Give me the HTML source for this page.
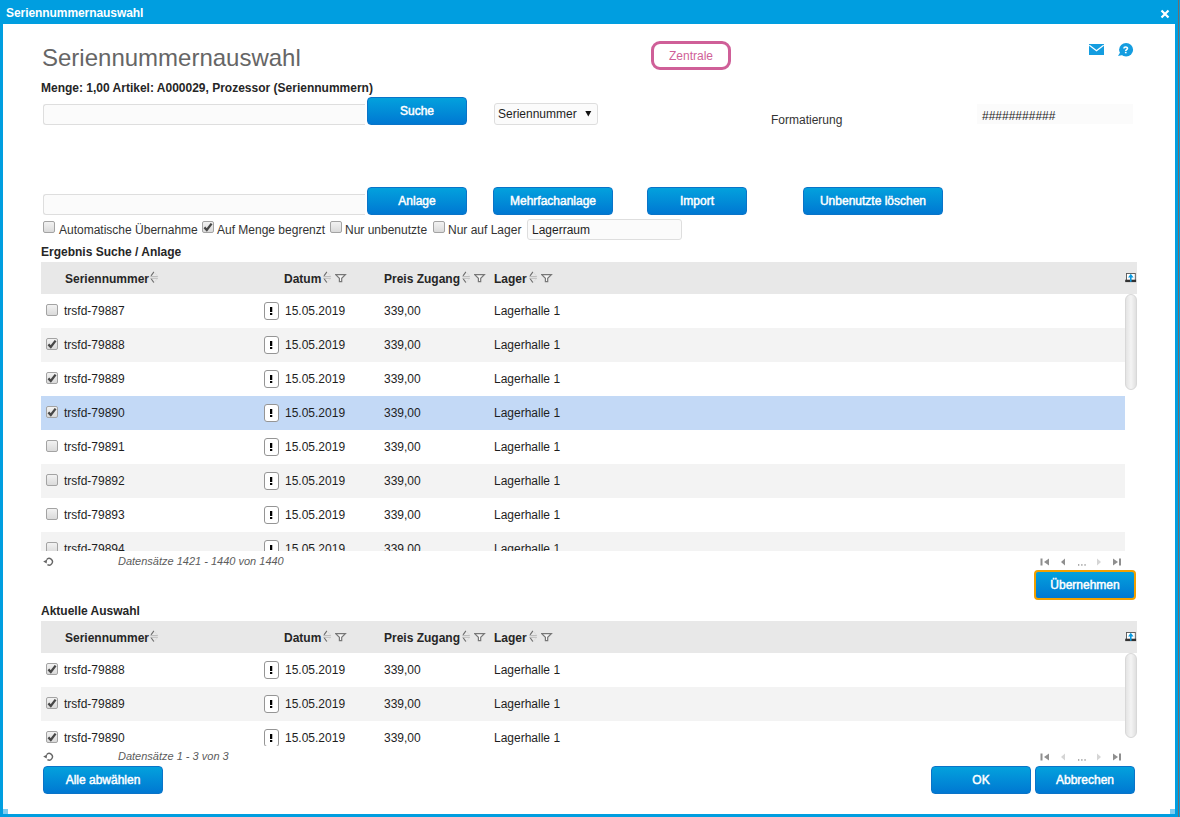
<!DOCTYPE html><html><head><meta charset="utf-8"><style>
*{box-sizing:border-box;margin:0;padding:0}
html,body{width:1180px;height:817px;overflow:hidden;background:#009ee0;font-family:"Liberation Sans",sans-serif;font-size:12px;color:#1e1e1e}
div,span{position:absolute}
svg{display:block}
.t{line-height:14px;white-space:nowrap}
.b{font-weight:bold;color:#262626}
.btn{height:28px;border:1px solid #0a74c8;border-radius:4px;background:linear-gradient(#03a1dd,#0078d2);color:#fff;font-weight:normal;-webkit-text-stroke:0.45px #fff;text-align:center;line-height:26px;white-space:nowrap}
.inp{border:1px solid #dedede;border-radius:3px;background:#fbfbfb}
.cb{width:12px;height:12px;border:1px solid #a3a3a3;border-radius:2px;background:linear-gradient(#f2f2f2,#dadada)}
.cb svg{position:absolute;left:0;top:0}
.hdr{height:32px;background:#e8e8e8}
.row{height:34px}
.ex{width:15px;height:18px;border:1px solid #959595;border-radius:3px;background:#fff}
.ex:before{content:"";position:absolute;left:5px;top:4px;width:2px;height:5px;background:#000;box-shadow:0.4px 0 0 #555}
.ex:after{content:"";position:absolute;left:5px;top:10px;width:2px;height:2px;background:#000;box-shadow:0.4px 0 0 #555}
.ft{font-style:italic;font-size:11px;line-height:13px;color:#5c5c5c;white-space:nowrap}
</style></head><body>
<div style="left:3px;top:24px;width:1172px;height:790px;background:#fff"></div>
<div style="left:1178px;top:0;width:1px;height:817px;background:#6e6e6e"></div>
<div style="left:3px;top:809px;width:5px;height:5px;background:#7fcdf0"></div>
<div style="left:1170px;top:809px;width:5px;height:5px;background:#7fcdf0"></div>
<div class="t b" style="left:6px;top:6px;color:#fff;letter-spacing:-0.07px">Seriennummernauswahl</div>
<span style="left:1160px;top:9px"><svg width="10" height="10" viewBox="0 0 10 10"><path d="M1.5 1.5 L8.5 8.5 M8.5 1.5 L1.5 8.5" stroke="#fff" stroke-width="2.2"/></svg></span>
<div class="t" style="left:42px;top:44px;font-size:24px;line-height:28px;color:#666">Seriennummernauswahl</div>
<div style="left:651px;top:41px;width:80px;height:29px;border:3px solid #cf5f98;border-radius:9px;background:#fff"></div>
<div class="t" style="left:669px;top:49px;color:#cf5f98">Zentrale</div>
<span style="left:1089px;top:44px"><svg width="15" height="11" viewBox="0 0 15 11"><rect width="15" height="11" fill="#149de0"/><path d="M0.3 1.2 L7.5 6.8 L14.7 1.2" fill="none" stroke="#fff" stroke-width="1.3"/></svg></span>
<span style="left:1117px;top:41px"><svg width="17" height="17" viewBox="0 0 17 17"><ellipse cx="9.1" cy="8.7" rx="7" ry="6.7" fill="#149de0"/><path d="M1 15 L4 10 L8 13.5 Z" fill="#149de0"/><path d="M6.9 7.4 C6.9 5.6 10.5 5.5 10.5 7.3 C10.5 8.5 8.7 8.6 8.7 10" fill="none" stroke="#fff" stroke-width="1.6"/><rect x="7.9" y="10.8" width="1.7" height="1.5" fill="#fff"/></svg></span>
<div class="t b" style="left:41px;top:81px;">Menge: 1,00 Artikel: A000029, Prozessor (Seriennummern)</div>
<div class="inp" style="left:43px;top:104px;width:322px;height:21px;border-right:0;border-radius:3px 0 0 3px"></div>
<div class="btn" style="left:367px;top:97px;width:100px;">Suche</div>
<div class="inp" style="left:494px;top:103px;width:104px;height:22px"></div>
<div class="t" style="left:498px;top:107px;">Seriennummer</div>
<span style="left:585px;top:111px"><svg width="7" height="6" viewBox="0 0 7 6"><path d="M0.3 0 H6.3 L3.3 5.5 Z" fill="#111"/></svg></span>
<div class="t" style="left:771px;top:113px;color:#333">Formatierung</div>
<div style="left:977px;top:104px;width:156px;height:20px;background:#fbfbfb"></div>
<div class="t" style="left:982px;top:109px;">###########</div>
<div class="inp" style="left:43px;top:194px;width:322px;height:21px;border-right:0;border-radius:3px 0 0 3px"></div>
<div class="btn" style="left:367px;top:187px;width:100px;">Anlage</div>
<div class="btn" style="left:493px;top:187px;width:120px;">Mehrfachanlage</div>
<div class="btn" style="left:647px;top:187px;width:100px;">Import</div>
<div class="btn" style="left:803px;top:187px;width:140px;">Unbenutzte löschen</div>
<div class="cb" style="left:43px;top:221px"></div>
<div class="t" style="left:59px;top:223px;color:#333">Automatische Übernahme</div>
<div class="cb" style="left:202px;top:221px"><svg width="10" height="10" viewBox="0 0 10 10"><path d="M1.4 5.4 L3.8 8.0 L8.6 1.6" fill="none" stroke="#474747" stroke-width="2.3"/></svg></div>
<div class="t" style="left:217px;top:223px;color:#333">Auf Menge begrenzt</div>
<div class="cb" style="left:330px;top:221px"></div>
<div class="t" style="left:345px;top:223px;color:#333">Nur unbenutzte</div>
<div class="cb" style="left:433px;top:221px"></div>
<div class="t" style="left:448px;top:223px;color:#333">Nur auf Lager</div>
<div class="inp" style="left:527px;top:219px;width:155px;height:21px"></div>
<div class="t" style="left:532px;top:223px;">Lagerraum</div>
<div class="t b" style="left:41px;top:245px;">Ergebnis Suche / Anlage</div>
<div class="hdr" style="left:41px;top:262px;width:1096px"></div>
<div class="t b" style="left:65px;top:272px;">Seriennummer</div>
<span style="left:150px;top:271px"><svg width="9" height="12" viewBox="0 0 9 12"><path d="M3.9 0.9 L1 4.9 M1 7.5 L3.9 11.6" stroke="#6e6e6e" stroke-width="1.1" fill="none"/><path d="M4.1 0.9 L7.8 5.4 M7.8 7.2 L4.1 11.6" stroke="#dcdcdc" stroke-width="1" fill="none"/><path d="M0.3 5.5 H7.8 M0.3 7.3 H7.8" stroke="#b8b8b8" stroke-width="0.9"/></svg></span>
<div class="t b" style="left:284px;top:272px;">Datum</div>
<span style="left:323px;top:271px"><svg width="9" height="12" viewBox="0 0 9 12"><path d="M3.9 0.9 L1 4.9 M1 7.5 L3.9 11.6" stroke="#6e6e6e" stroke-width="1.1" fill="none"/><path d="M4.1 0.9 L7.8 5.4 M7.8 7.2 L4.1 11.6" stroke="#dcdcdc" stroke-width="1" fill="none"/><path d="M0.3 5.5 H7.8 M0.3 7.3 H7.8" stroke="#b8b8b8" stroke-width="0.9"/></svg></span>
<span style="left:335px;top:274px"><svg width="12" height="9" viewBox="0 0 12 9"><path d="M0.6 0.6 H10.4 L6.7 4.3 V7.6 H4.4 V4.3 Z" fill="#f6f6f6" stroke="#777" stroke-width="1.2" stroke-linejoin="miter"/></svg></span>
<div class="t b" style="left:384px;top:272px;">Preis Zugang</div>
<span style="left:462px;top:271px"><svg width="9" height="12" viewBox="0 0 9 12"><path d="M3.9 0.9 L1 4.9 M1 7.5 L3.9 11.6" stroke="#6e6e6e" stroke-width="1.1" fill="none"/><path d="M4.1 0.9 L7.8 5.4 M7.8 7.2 L4.1 11.6" stroke="#dcdcdc" stroke-width="1" fill="none"/><path d="M0.3 5.5 H7.8 M0.3 7.3 H7.8" stroke="#b8b8b8" stroke-width="0.9"/></svg></span>
<span style="left:474px;top:274px"><svg width="12" height="9" viewBox="0 0 12 9"><path d="M0.6 0.6 H10.4 L6.7 4.3 V7.6 H4.4 V4.3 Z" fill="#f6f6f6" stroke="#777" stroke-width="1.2" stroke-linejoin="miter"/></svg></span>
<div class="t b" style="left:494px;top:272px;">Lager</div>
<span style="left:529px;top:271px"><svg width="9" height="12" viewBox="0 0 9 12"><path d="M3.9 0.9 L1 4.9 M1 7.5 L3.9 11.6" stroke="#6e6e6e" stroke-width="1.1" fill="none"/><path d="M4.1 0.9 L7.8 5.4 M7.8 7.2 L4.1 11.6" stroke="#dcdcdc" stroke-width="1" fill="none"/><path d="M0.3 5.5 H7.8 M0.3 7.3 H7.8" stroke="#b8b8b8" stroke-width="0.9"/></svg></span>
<span style="left:541px;top:274px"><svg width="12" height="9" viewBox="0 0 12 9"><path d="M0.6 0.6 H10.4 L6.7 4.3 V7.6 H4.4 V4.3 Z" fill="#f6f6f6" stroke="#777" stroke-width="1.2" stroke-linejoin="miter"/></svg></span>
<span style="left:1125px;top:273px"><svg width="12" height="10" viewBox="0 0 12 10"><rect x="1.5" y="0.5" width="8.8" height="7" fill="#fff" stroke="#555" stroke-width="0.9"/><rect x="0.2" y="6.7" width="10.9" height="2.4" fill="#333"/><path d="M5.8 0.7 L3 4.4 H5 V8.8 H6.6 V4.4 H8.6 Z" fill="#0a9ae0"/></svg></span>
<div style="left:41px;top:294px;width:1084px;height:257px;overflow:hidden">
<div class="row" style="left:0;top:0px;width:1084px;background:#fff">
<div class="cb" style="left:5px;top:10px"></div>
<div class="t" style="left:23px;top:10px;">trsfd-79887</div>
<div class="ex" style="left:223px;top:8px"></div>
<div class="t" style="left:244px;top:10px;">15.05.2019</div>
<div class="t" style="left:343px;top:10px;">339,00</div>
<div class="t" style="left:453px;top:10px;">Lagerhalle 1</div>
</div>
<div class="row" style="left:0;top:34px;width:1084px;background:#f3f3f3">
<div class="cb" style="left:5px;top:10px"><svg width="10" height="10" viewBox="0 0 10 10"><path d="M1.4 5.4 L3.8 8.0 L8.6 1.6" fill="none" stroke="#474747" stroke-width="2.3"/></svg></div>
<div class="t" style="left:23px;top:10px;">trsfd-79888</div>
<div class="ex" style="left:223px;top:8px"></div>
<div class="t" style="left:244px;top:10px;">15.05.2019</div>
<div class="t" style="left:343px;top:10px;">339,00</div>
<div class="t" style="left:453px;top:10px;">Lagerhalle 1</div>
</div>
<div class="row" style="left:0;top:68px;width:1084px;background:#fff">
<div class="cb" style="left:5px;top:10px"><svg width="10" height="10" viewBox="0 0 10 10"><path d="M1.4 5.4 L3.8 8.0 L8.6 1.6" fill="none" stroke="#474747" stroke-width="2.3"/></svg></div>
<div class="t" style="left:23px;top:10px;">trsfd-79889</div>
<div class="ex" style="left:223px;top:8px"></div>
<div class="t" style="left:244px;top:10px;">15.05.2019</div>
<div class="t" style="left:343px;top:10px;">339,00</div>
<div class="t" style="left:453px;top:10px;">Lagerhalle 1</div>
</div>
<div class="row" style="left:0;top:102px;width:1084px;background:#c3d9f6">
<div class="cb" style="left:5px;top:10px"><svg width="10" height="10" viewBox="0 0 10 10"><path d="M1.4 5.4 L3.8 8.0 L8.6 1.6" fill="none" stroke="#474747" stroke-width="2.3"/></svg></div>
<div class="t" style="left:23px;top:10px;">trsfd-79890</div>
<div class="ex" style="left:223px;top:8px"></div>
<div class="t" style="left:244px;top:10px;">15.05.2019</div>
<div class="t" style="left:343px;top:10px;">339,00</div>
<div class="t" style="left:453px;top:10px;">Lagerhalle 1</div>
</div>
<div class="row" style="left:0;top:136px;width:1084px;background:#fff">
<div class="cb" style="left:5px;top:10px"></div>
<div class="t" style="left:23px;top:10px;">trsfd-79891</div>
<div class="ex" style="left:223px;top:8px"></div>
<div class="t" style="left:244px;top:10px;">15.05.2019</div>
<div class="t" style="left:343px;top:10px;">339,00</div>
<div class="t" style="left:453px;top:10px;">Lagerhalle 1</div>
</div>
<div class="row" style="left:0;top:170px;width:1084px;background:#f3f3f3">
<div class="cb" style="left:5px;top:10px"></div>
<div class="t" style="left:23px;top:10px;">trsfd-79892</div>
<div class="ex" style="left:223px;top:8px"></div>
<div class="t" style="left:244px;top:10px;">15.05.2019</div>
<div class="t" style="left:343px;top:10px;">339,00</div>
<div class="t" style="left:453px;top:10px;">Lagerhalle 1</div>
</div>
<div class="row" style="left:0;top:204px;width:1084px;background:#fff">
<div class="cb" style="left:5px;top:10px"></div>
<div class="t" style="left:23px;top:10px;">trsfd-79893</div>
<div class="ex" style="left:223px;top:8px"></div>
<div class="t" style="left:244px;top:10px;">15.05.2019</div>
<div class="t" style="left:343px;top:10px;">339,00</div>
<div class="t" style="left:453px;top:10px;">Lagerhalle 1</div>
</div>
<div class="row" style="left:0;top:238px;width:1084px;background:#f3f3f3">
<div class="cb" style="left:5px;top:10px"></div>
<div class="t" style="left:23px;top:10px;">trsfd-79894</div>
<div class="ex" style="left:223px;top:8px"></div>
<div class="t" style="left:244px;top:10px;">15.05.2019</div>
<div class="t" style="left:343px;top:10px;">339,00</div>
<div class="t" style="left:453px;top:10px;">Lagerhalle 1</div>
</div>
</div>
<div style="left:1125px;top:294px;width:12px;height:96px;border-radius:6px;background:linear-gradient(90deg,#e4e4e4,#f4f4f4 50%,#e0e0e0);border:1px solid #d8d8d8"></div>
<span style="left:42px;top:556px"><svg width="12" height="11" viewBox="0 0 12 11"><path d="M5.4 8.6 A3.3 3.3 0 1 0 4.6 3.6" fill="none" stroke="#666" stroke-width="1.4"/><path d="M1.2 5.6 L5.2 3.4 L4.6 7.4 Z" fill="#666"/></svg></span>
<div class="ft" style="left:118px;top:555px">Datensätze 1421 - 1440 von 1440</div>
<span style="left:1040px;top:558px"><svg width="82" height="8" viewBox="0 0 82 8"><rect x="0.5" y="0.5" width="2" height="7" fill="#8f8f8f"/><path d="M9 0.5 V7.5 L4 4 Z" fill="#8f8f8f"/><path d="M25 0.5 V7.5 L21 4 Z" fill="#8f8f8f"/><rect x="38" y="6.3" width="1.3" height="1.3" fill="#888"/><rect x="41.2" y="6.3" width="1.3" height="1.3" fill="#888"/><rect x="44.4" y="6.3" width="1.3" height="1.3" fill="#888"/><path d="M57 0.5 V7.5 L61 4 Z" fill="#d5d5d5"/><path d="M73 0.5 V7.5 L78 4 Z" fill="#8f8f8f"/><rect x="79" y="0.5" width="2" height="7" fill="#8f8f8f"/></svg></span>
<div class="btn" style="left:1034px;top:570px;width:102px;height:30px;border:2px solid #f2a000;line-height:26px">Übernehmen</div>
<div class="t b" style="left:41px;top:604px;">Aktuelle Auswahl</div>
<div class="hdr" style="left:41px;top:621px;width:1096px"></div>
<div class="t b" style="left:65px;top:631px;">Seriennummer</div>
<span style="left:150px;top:630px"><svg width="9" height="12" viewBox="0 0 9 12"><path d="M3.9 0.9 L1 4.9 M1 7.5 L3.9 11.6" stroke="#6e6e6e" stroke-width="1.1" fill="none"/><path d="M4.1 0.9 L7.8 5.4 M7.8 7.2 L4.1 11.6" stroke="#dcdcdc" stroke-width="1" fill="none"/><path d="M0.3 5.5 H7.8 M0.3 7.3 H7.8" stroke="#b8b8b8" stroke-width="0.9"/></svg></span>
<div class="t b" style="left:284px;top:631px;">Datum</div>
<span style="left:323px;top:630px"><svg width="9" height="12" viewBox="0 0 9 12"><path d="M3.9 0.9 L1 4.9 M1 7.5 L3.9 11.6" stroke="#6e6e6e" stroke-width="1.1" fill="none"/><path d="M4.1 0.9 L7.8 5.4 M7.8 7.2 L4.1 11.6" stroke="#dcdcdc" stroke-width="1" fill="none"/><path d="M0.3 5.5 H7.8 M0.3 7.3 H7.8" stroke="#b8b8b8" stroke-width="0.9"/></svg></span>
<span style="left:335px;top:633px"><svg width="12" height="9" viewBox="0 0 12 9"><path d="M0.6 0.6 H10.4 L6.7 4.3 V7.6 H4.4 V4.3 Z" fill="#f6f6f6" stroke="#777" stroke-width="1.2" stroke-linejoin="miter"/></svg></span>
<div class="t b" style="left:384px;top:631px;">Preis Zugang</div>
<span style="left:462px;top:630px"><svg width="9" height="12" viewBox="0 0 9 12"><path d="M3.9 0.9 L1 4.9 M1 7.5 L3.9 11.6" stroke="#6e6e6e" stroke-width="1.1" fill="none"/><path d="M4.1 0.9 L7.8 5.4 M7.8 7.2 L4.1 11.6" stroke="#dcdcdc" stroke-width="1" fill="none"/><path d="M0.3 5.5 H7.8 M0.3 7.3 H7.8" stroke="#b8b8b8" stroke-width="0.9"/></svg></span>
<span style="left:474px;top:633px"><svg width="12" height="9" viewBox="0 0 12 9"><path d="M0.6 0.6 H10.4 L6.7 4.3 V7.6 H4.4 V4.3 Z" fill="#f6f6f6" stroke="#777" stroke-width="1.2" stroke-linejoin="miter"/></svg></span>
<div class="t b" style="left:494px;top:631px;">Lager</div>
<span style="left:529px;top:630px"><svg width="9" height="12" viewBox="0 0 9 12"><path d="M3.9 0.9 L1 4.9 M1 7.5 L3.9 11.6" stroke="#6e6e6e" stroke-width="1.1" fill="none"/><path d="M4.1 0.9 L7.8 5.4 M7.8 7.2 L4.1 11.6" stroke="#dcdcdc" stroke-width="1" fill="none"/><path d="M0.3 5.5 H7.8 M0.3 7.3 H7.8" stroke="#b8b8b8" stroke-width="0.9"/></svg></span>
<span style="left:541px;top:633px"><svg width="12" height="9" viewBox="0 0 12 9"><path d="M0.6 0.6 H10.4 L6.7 4.3 V7.6 H4.4 V4.3 Z" fill="#f6f6f6" stroke="#777" stroke-width="1.2" stroke-linejoin="miter"/></svg></span>
<span style="left:1125px;top:632px"><svg width="12" height="10" viewBox="0 0 12 10"><rect x="1.5" y="0.5" width="8.8" height="7" fill="#fff" stroke="#555" stroke-width="0.9"/><rect x="0.2" y="6.7" width="10.9" height="2.4" fill="#333"/><path d="M5.8 0.7 L3 4.4 H5 V8.8 H6.6 V4.4 H8.6 Z" fill="#0a9ae0"/></svg></span>
<div style="left:41px;top:653px;width:1084px;height:93px;overflow:hidden">
<div class="row" style="left:0;top:0px;width:1084px;background:#fff">
<div class="cb" style="left:5px;top:10px"><svg width="10" height="10" viewBox="0 0 10 10"><path d="M1.4 5.4 L3.8 8.0 L8.6 1.6" fill="none" stroke="#474747" stroke-width="2.3"/></svg></div>
<div class="t" style="left:23px;top:10px;">trsfd-79888</div>
<div class="ex" style="left:223px;top:8px"></div>
<div class="t" style="left:244px;top:10px;">15.05.2019</div>
<div class="t" style="left:343px;top:10px;">339,00</div>
<div class="t" style="left:453px;top:10px;">Lagerhalle 1</div>
</div>
<div class="row" style="left:0;top:34px;width:1084px;background:#f3f3f3">
<div class="cb" style="left:5px;top:10px"><svg width="10" height="10" viewBox="0 0 10 10"><path d="M1.4 5.4 L3.8 8.0 L8.6 1.6" fill="none" stroke="#474747" stroke-width="2.3"/></svg></div>
<div class="t" style="left:23px;top:10px;">trsfd-79889</div>
<div class="ex" style="left:223px;top:8px"></div>
<div class="t" style="left:244px;top:10px;">15.05.2019</div>
<div class="t" style="left:343px;top:10px;">339,00</div>
<div class="t" style="left:453px;top:10px;">Lagerhalle 1</div>
</div>
<div class="row" style="left:0;top:68px;width:1084px;background:#fff">
<div class="cb" style="left:5px;top:10px"><svg width="10" height="10" viewBox="0 0 10 10"><path d="M1.4 5.4 L3.8 8.0 L8.6 1.6" fill="none" stroke="#474747" stroke-width="2.3"/></svg></div>
<div class="t" style="left:23px;top:10px;">trsfd-79890</div>
<div class="ex" style="left:223px;top:8px"></div>
<div class="t" style="left:244px;top:10px;">15.05.2019</div>
<div class="t" style="left:343px;top:10px;">339,00</div>
<div class="t" style="left:453px;top:10px;">Lagerhalle 1</div>
</div>
</div>
<div style="left:1125px;top:653px;width:12px;height:85px;border-radius:6px;background:linear-gradient(90deg,#e4e4e4,#f4f4f4 50%,#e0e0e0);border:1px solid #d8d8d8"></div>
<span style="left:42px;top:751px"><svg width="12" height="11" viewBox="0 0 12 11"><path d="M5.4 8.6 A3.3 3.3 0 1 0 4.6 3.6" fill="none" stroke="#666" stroke-width="1.4"/><path d="M1.2 5.6 L5.2 3.4 L4.6 7.4 Z" fill="#666"/></svg></span>
<div class="ft" style="left:118px;top:750px">Datensätze 1 - 3 von 3</div>
<span style="left:1040px;top:753px"><svg width="82" height="8" viewBox="0 0 82 8"><rect x="0.5" y="0.5" width="2" height="7" fill="#8f8f8f"/><path d="M9 0.5 V7.5 L4 4 Z" fill="#8f8f8f"/><path d="M25 0.5 V7.5 L21 4 Z" fill="#d5d5d5"/><rect x="38" y="6.3" width="1.3" height="1.3" fill="#888"/><rect x="41.2" y="6.3" width="1.3" height="1.3" fill="#888"/><rect x="44.4" y="6.3" width="1.3" height="1.3" fill="#888"/><path d="M57 0.5 V7.5 L61 4 Z" fill="#d5d5d5"/><path d="M73 0.5 V7.5 L78 4 Z" fill="#8f8f8f"/><rect x="79" y="0.5" width="2" height="7" fill="#8f8f8f"/></svg></span>
<div class="btn" style="left:43px;top:766px;width:120px;">Alle abwählen</div>
<div class="btn" style="left:931px;top:766px;width:100px;">OK</div>
<div class="btn" style="left:1035px;top:766px;width:100px;">Abbrechen</div>
</body></html>
